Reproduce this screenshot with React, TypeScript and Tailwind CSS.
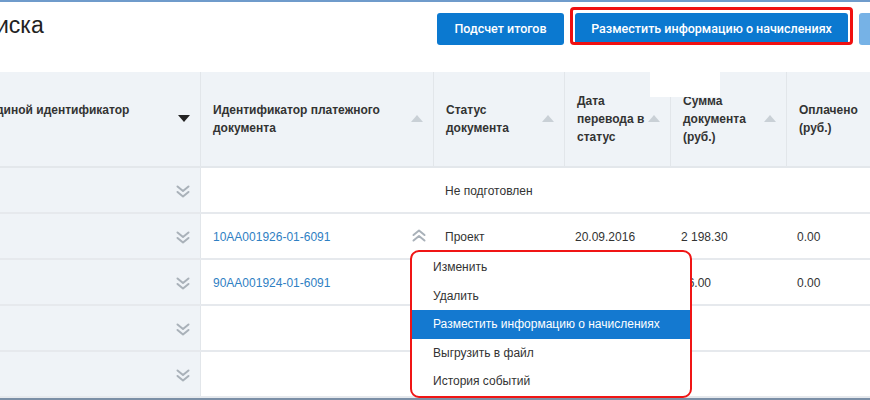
type Col = { w: string; label: string[]; sort: "down" | "up" | "none"; lift?: boolean };

const columns: Col[] = [
  { w: "w-[200px]", label: ["Единой идентификатор"], sort: "down", lift: true },
  { w: "w-[233px]", label: ["Идентификатор платежного", "документа"], sort: "up" },
  { w: "w-[131px]", label: ["Статус", "документа"], sort: "up" },
  { w: "w-[106px]", label: ["Дата", "перевода в", "статус"], sort: "up" },
  { w: "w-[116px]", label: ["Сумма", "документа", "(руб.)"], sort: "up" },
  { w: "flex-1", label: ["Оплачено", "(руб.)"], sort: "none" },
];

const rows = [
  { id: "", status: "Не подготовлен", date: "", sum: "", paid: "", open: false },
  { id: "10AA001926-01-6091", status: "Проект", date: "20.09.2016", sum: "2 198.30", paid: "0.00", open: true },
  { id: "90AA001924-01-6091", status: "", date: "", sum: "46.00", paid: "0.00", open: false },
  { id: "", status: "", date: "", sum: "", paid: "", open: false },
  { id: "", status: "", date: "", sum: "", paid: "", open: false },
];

const menuItems = [
  "Изменить",
  "Удалить",
  "Разместить информацию о начислениях",
  "Выгрузить в файл",
  "История событий",
];

function SortArrow({ dir }: { dir: "down" | "up" | "none" }) {
  if (dir === "none") return null;
  return (
    <svg width="12" height="8" viewBox="0 0 12 8" className="shrink-0">
      {dir === "down" ? (
        <path d="M0 0 L12 0 L6 7 Z" fill="#222" />
      ) : (
        <path d="M0 7 L12 7 L6 0 Z" fill="#c9d0d6" />
      )}
    </svg>
  );
}

// double chevron used to expand / collapse a row
function Chevrons({ up = false }: { up?: boolean }) {
  return (
    <svg width="14" height="13" viewBox="0 0 14 13" className="shrink-0">
      <g fill="none" stroke="#a9b1b9" strokeWidth="2" strokeLinecap="round" strokeLinejoin="round">
        {up ? (
          <>
            <path d="M1.5 6 L7 1.5 L12.5 6" />
            <path d="M1.5 11.5 L7 7 L12.5 11.5" />
          </>
        ) : (
          <>
            <path d="M1.5 1.5 L7 6 L12.5 1.5" />
            <path d="M1.5 7 L7 11.5 L12.5 7" />
          </>
        )}
      </g>
    </svg>
  );
}

export default function App() {
  return (
    <div
      className="relative w-[870px] h-[400px] overflow-hidden bg-white text-[12px] text-[#333]"
      style={{ fontFamily: '"Liberation Sans", Arial, sans-serif' }}
    >
      <div className="h-[2px] bg-[#6f9bcb]" />

      {/* Top bar */}
      <div className="flex h-[70px] items-start">
        <div className="w-[437px] shrink-0">
          <h1 className="mt-[8px] -ml-[4px] text-[23px] leading-[30px] text-[#222]">иска</h1>
        </div>
        <div
          className="mt-[11px] flex shrink-0 gap-[11px]"
          style={{ fontFamily: "Roboto, Arial, sans-serif" }}
        >
          <button className="h-[32px] w-[127px] rounded-[3px] bg-[#0b79d0] text-[12.5px] font-medium text-white">
            Подсчет итогов
          </button>
          <div className="relative">
            <button className="h-[32px] w-[273px] rounded-[3px] bg-[#0b79d0] text-[12.5px] font-medium text-white">
              Разместить информацию о начислениях
            </button>
            <div className="absolute -left-[5px] -top-[6px] h-[38px] w-[283px] rounded-[4px] border-[3px] border-[#f01010]" />
          </div>
          <div className="h-[32px] w-[40px] rounded-[3px] bg-[#76b2e6]" />
        </div>
      </div>

      {/* Header */}
      <div className="flex h-[96px] bg-[#eff3f7] border-b-2 border-[#e3e7eb]">
        {columns.map((c, i) => (
          <div
            key={i}
            className={`${c.w} flex items-center justify-between pl-[12px] pr-[10px] font-bold leading-[18px] ${
              i > 0 ? "border-l border-[#e2e6ea]" : ""
            }`}
          >
            <div className={c.lift ? "-ml-[24px] pb-[18px]" : ""}>
              {c.label.map((l) => (
                <div key={l}>{l}</div>
              ))}
            </div>
            <SortArrow dir={c.sort} />
          </div>
        ))}
      </div>

      {/* Rows */}
      {rows.map((r, i) => (
        <div key={i} className="flex h-[46px] border-b-2 border-[#e6e9ed]">
          <div className="w-[200px] flex justify-end items-start bg-[#eff3f7] pr-[10px] pt-[17px]">
            <Chevrons />
          </div>
          <div className="w-[233px] flex justify-between items-start pl-[12px] pr-[7px] pt-[14px] border-l border-[#e2e6ea]">
            <span className="text-[#2f80c3]">{r.id}</span>
            {r.open && (
              <span className="mt-[1px]">
                <Chevrons up />
              </span>
            )}
          </div>
          <div className="w-[131px] pl-[12px] pt-[14px]">{r.status}</div>
          <div className="w-[106px] pl-[11px] pt-[14px]">{r.date}</div>
          <div className="w-[116px] pl-[11px] pt-[14px]">{r.sum}</div>
          <div className="flex-1 pl-[11px] pt-[14px]">{r.paid}</div>
        </div>
      ))}

      {/* Redaction patch */}
      <div className="absolute left-[650px] top-[72px] h-[25px] w-[70px] bg-white" />

      {/* Context menu */}
      <div className="absolute left-[410px] top-[250px] w-[282px] rounded-[9px] border-2 border-[#f01515] bg-white pt-[1px]">
        {menuItems.map((m, i) => (
          <div
            key={m}
            className={`flex h-[28.5px] items-center pl-[21px] ${
              i === 2 ? "bg-[#1479d0] text-white" : "text-[#333]"
            }`}
          >
            {m}
          </div>
        ))}
      </div>

      <div className="absolute bottom-0 left-0 h-[2px] w-full bg-[#7b8fa6]" />
    </div>
  );
}
